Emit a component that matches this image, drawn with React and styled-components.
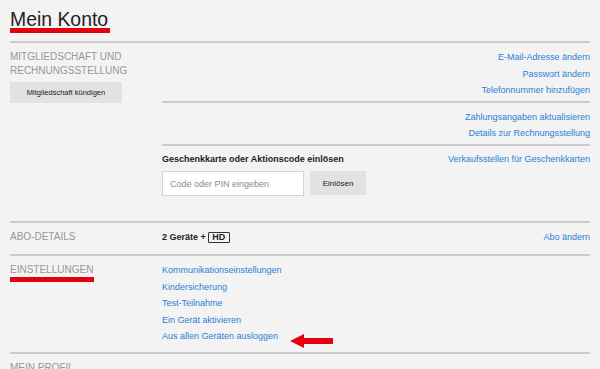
import React from 'react';
import styled, { createGlobalStyle } from 'styled-components';

const GlobalStyle = createGlobalStyle`
  body {
    margin: 0;
    background: #f3f3f3;
    font-family: "Liberation Sans", Arial, sans-serif;
  }
`;

const Page = styled.div`
  width: 580px;
  height: 369px;
  padding: 0 10px;
  overflow: hidden;
`;

const Header = styled.header`
  display: flex;
  flex-direction: column;
  align-items: flex-start;
  padding: 10px 0 8px;
`;

const Title = styled.h1`
  margin: 0;
  font-size: 19.4px;
  line-height: 19px;
  font-weight: normal;
  color: #222;
`;

const Mark = styled.div`
  width: ${p => p.width}px;
  height: 5px;
  margin-top: ${p => p.offset || 0}px;
  background: #e3000f;
`;

const Section = styled.section`
  display: flex;
  border-top: 2px solid #cbcbcb;
  padding: 6px 0 ${p => p.bottom}px;
`;

const Left = styled.div`
  width: 152px;
  flex-shrink: 0;
  display: flex;
  flex-direction: column;
  align-items: flex-start;
`;

const Right = styled.div`
  flex: 1;
  display: flex;
  flex-direction: column;
  padding-top: ${p => p.top || 0}px;
`;

const SectionTitle = styled.h2`
  margin: 1px 0 0;
  font-size: 10px;
  line-height: 14px;
  font-weight: normal;
  text-transform: uppercase;
  color: #979797;
`;

const LinkGroup = styled.div`
  display: flex;
  flex-direction: column;
  align-items: ${p => (p.start ? 'flex-start' : 'flex-end')};
  padding: ${p => (p.first ? 0 : 6)}px 0 2px;
`;

const Link = styled.a`
  font-size: 9px;
  line-height: ${p => p.lh || 16.5}px;
  color: #2b7fd4;
  text-decoration: none;
  cursor: pointer;
`;

const Divider = styled.div`
  height: 2px;
  background: #cbcbcb;
`;

const GiftRow = styled.div`
  display: flex;
  justify-content: space-between;
  align-items: flex-start;
  padding-top: 5.5px;
`;

const GiftLabel = styled.div`
  font-size: 9px;
  line-height: 16px;
  font-weight: bold;
  color: #222;
`;

const FormRow = styled.div`
  display: flex;
  gap: 6px;
  margin-top: 4px;
`;

const CodeInput = styled.input`
  box-sizing: border-box;
  width: 142px;
  height: 25px;
  padding: 0 7px;
  border: 1px solid #d4d4d4;
  background: #fff;
  font-family: inherit;
  font-size: 9px;
  outline: none;
  &::placeholder {
    color: #8a8a8a;
  }
`;

const GrayButton = styled.button`
  width: ${p => p.width}px;
  height: ${p => p.height}px;
  margin-top: ${p => p.top || 0}px;
  padding: 0;
  border: none;
  background: #e2e2e2;
  font-family: inherit;
  font-size: ${p => p.size}px;
  color: #1a1a1a;
  cursor: pointer;
`;

const PlanRow = styled.div`
  display: flex;
  justify-content: space-between;
  align-items: center;
`;

const Plan = styled.div`
  display: flex;
  align-items: center;
  gap: 2px;
  font-size: 9px;
  line-height: 16.5px;
  font-weight: bold;
  color: #222;
`;

const HdBadge = styled.span`
  box-sizing: border-box;
  display: inline-flex;
  align-items: center;
  justify-content: center;
  width: 22px;
  height: 11px;
  border: 1.5px solid #333;
  border-radius: 1px;
  font-size: 9px;
  font-weight: bold;
`;

const ArrowRow = styled.div`
  display: flex;
  align-items: flex-start;
  gap: 12px;
`;

const Arrow = styled.svg`
  margin: 6px 0 -6px;
  flex-shrink: 0;
`;

export default function App() {
  return (
    <Page>
      <GlobalStyle />
      <Header>
        <Title>Mein Konto</Title>
        <Mark width={100} offset={-1} />
      </Header>

      <Section bottom={25}>
        <Left>
          <SectionTitle>
            Mitgliedschaft und
            <br />
            Rechnungsstellung
          </SectionTitle>
          <GrayButton width={112} height={21} top={4} size={7.5}>
            Mitgliedschaft kündigen
          </GrayButton>
        </Left>
        <Right>
          <LinkGroup first>
            <Link>E-Mail-Adresse ändern</Link>
            <Link>Passwort ändern</Link>
            <Link>Telefonnummer hinzufügen</Link>
          </LinkGroup>
          <Divider />
          <LinkGroup>
            <Link>Zahlungsangaben aktualisieren</Link>
            <Link>Details zur Rechnungsstellung</Link>
          </LinkGroup>
          <Divider />
          <GiftRow>
            <div>
              <GiftLabel>Geschenkkarte oder Aktionscode einlösen</GiftLabel>
              <FormRow>
                <CodeInput placeholder="Code oder PIN eingeben" />
                <GrayButton width={56} height={24} size={8}>
                  Einlösen
                </GrayButton>
              </FormRow>
            </div>
            <Link lh={16}>Verkaufsstellen für Geschenkkarten</Link>
          </GiftRow>
        </Right>
      </Section>

      <Section bottom={8.5}>
        <Left>
          <SectionTitle>Abo-Details</SectionTitle>
        </Left>
        <Right>
          <PlanRow>
            <Plan>
              2 Geräte + <HdBadge>HD</HdBadge>
            </Plan>
            <Link>Abo ändern</Link>
          </PlanRow>
        </Right>
      </Section>

      <Section bottom={5.5}>
        <Left>
          <SectionTitle>Einstellungen</SectionTitle>
          <Mark width={84} />
        </Left>
        <Right>
          <LinkGroup first start>
            <Link>Kommunikationseinstellungen</Link>
            <Link>Kindersicherung</Link>
            <Link>Test-Teilnahme</Link>
            <Link>Ein Gerät aktivieren</Link>
            <ArrowRow>
              <Link>Aus allen Geräten ausloggen</Link>
              <Arrow width="43" height="14" viewBox="0 0 43 14">
                <polygon points="0,7 14,0 14,4 43,4 43,10 14,10 14,14" fill="#e3000f" />
              </Arrow>
            </ArrowRow>
          </LinkGroup>
        </Right>
      </Section>

      <Section bottom={6}>
        <Left>
          <SectionTitle>Mein Profil</SectionTitle>
        </Left>
        <Right top={5}>
          <LinkGroup first>
            <Link>Profile verwalten</Link>
          </LinkGroup>
        </Right>
      </Section>
    </Page>
  );
}
